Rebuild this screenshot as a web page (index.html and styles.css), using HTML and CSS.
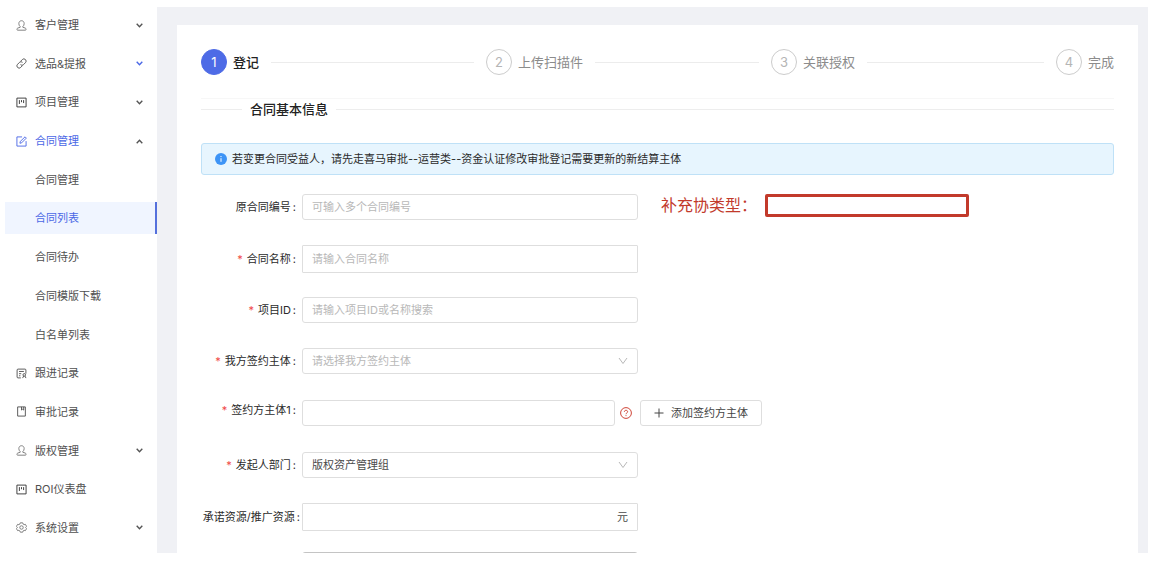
FILE: index.html
```html
<!DOCTYPE html>
<html lang="zh-CN">
<head>
<meta charset="utf-8">
<title>合同列表 - 登记</title>
<link rel="stylesheet" href="styles.css">
</head>
<body>
<svg class="sprite" aria-hidden="true">
  <symbol id="i-user" viewBox="0 0 12 12"><path d="M4.6 7.2C3.6 6.400 3.100 5.300 3.100 3.900 3.100 2 4.300.8 6 .8s2.900 1.200 2.900 3.100c0 1.400-.5 2.500-1.500 3.300v.7l2.700.9c.6.2.8.7.8 1.300v.4c0 .4-.2.600-.6.600H1.700c-.4 0-.6-.2-.6-.6v-.4c0-.6.2-1.100.8-1.300l2.700-.9z"/></symbol>
  <symbol id="i-link" viewBox="0 0 12 12"><path d="M5 3.600l1.900-1.900a2.300 2.300 0 0 1 3.400 3.400L8.200 7.200a2.300 2.300 0 0 1-3.300 0M7 8.400l-1.900 1.900a2.300 2.300 0 0 1-3.400-3.400l2.100-2.100a2.300 2.300 0 0 1 3.300 0"/></symbol>
  <symbol id="i-board" viewBox="0 0 12 12"><path d="M1 1.200h10v9.600H1zM3.700 3.400v4.200M6 3.400v2.300M8.300 3.400v3.200"/></symbol>
  <symbol id="i-edit" viewBox="0 0 12 12"><path d="M6.600 1H1v10h10V5.600M4.300 7.900l.3-1.900L9.900.9l1.400 1.400-5.200 5.200z"/></symbol>
  <symbol id="i-track" viewBox="0 0 12 12"><path d="M5.300 10.800H2.200a1 1 0 0 1-1-1V2.200a1 1 0 0 1 1-1h7.600a1 1 0 0 1 1 1v4M3.300 3.800h5.300M3.300 6.200h2.400M3.300 8.500h1.500M7.200 11l1.200-2.300M10.900 11L9.700 8.700"/><circle cx="9" cy="7.500" r="1.400"/></symbol>
  <symbol id="i-book" viewBox="0 0 12 12"><path d="M1.800 1h8.400v10H1.800zM6 1v3.400l1.200-.9 1.200.9V1"/></symbol>
  <symbol id="i-gear" viewBox="0 0 12 12"><path d="M4.700.9h2.600l.5 1.400 1 .6 1.500-.3 1.200 2.200-1 1.200 1 1.200-1.200 2.200-1.500-.3-1 .6-.5 1.400H4.700l-.5-1.400-1-.6-1.500.3L.5 7.200l1-1.200-1-1.200 1.200-2.200 1.500.3 1-.6z"/><circle cx="6" cy="6" r="1.900"/></symbol>
  <symbol id="i-down" viewBox="0 0 10 7"><path d="M1 1l4 4.200L9 1"/></symbol>
  <symbol id="i-up" viewBox="0 0 10 7"><path d="M1 6l4-4.200L9 6"/></symbol>
  <symbol id="i-open" viewBox="0 0 10 8"><path d="M1 1l4 5.500L9 1"/></symbol>
</svg>

<div class="app">
  <nav class="sidebar" aria-label="主菜单">
    <a class="item" href="#"><svg class="icon icon--thin"><use href="#i-user"/></svg>客户管理<svg class="arrow"><use href="#i-down"/></svg></a>
    <a class="item" href="#"><svg class="icon"><use href="#i-link"/></svg>选品&amp;提报<svg class="arrow arrow--blue"><use href="#i-down"/></svg></a>
    <a class="item" href="#"><svg class="icon icon--dark"><use href="#i-board"/></svg>项目管理<svg class="arrow"><use href="#i-down"/></svg></a>
    <a class="item item--open" href="#"><svg class="icon"><use href="#i-edit"/></svg>合同管理<svg class="arrow"><use href="#i-up"/></svg></a>
    <a class="item item--sub" href="#">合同管理</a>
    <a class="item item--sub item--current" href="#" aria-current="page">合同列表</a>
    <a class="item item--sub" href="#">合同待办</a>
    <a class="item item--sub" href="#">合同模版下载</a>
    <a class="item item--sub" href="#">白名单列表</a>
    <a class="item" href="#"><svg class="icon"><use href="#i-track"/></svg>跟进记录</a>
    <a class="item" href="#"><svg class="icon"><use href="#i-book"/></svg>审批记录</a>
    <a class="item" href="#"><svg class="icon icon--thin"><use href="#i-user"/></svg>版权管理<svg class="arrow"><use href="#i-down"/></svg></a>
    <a class="item" href="#"><svg class="icon icon--dark"><use href="#i-board"/></svg>ROI仪表盘</a>
    <a class="item" href="#"><svg class="icon icon--thin"><use href="#i-gear"/></svg>系统设置<svg class="arrow"><use href="#i-down"/></svg></a>
  </nav>

  <main class="main">
    <div class="card">
      <ol class="steps">
        <li class="step step--active"><span class="step-num">1</span>登记</li>
        <li class="step"><span class="step-num">2</span>上传扫描件</li>
        <li class="step"><span class="step-num">3</span>关联授权</li>
        <li class="step"><span class="step-num">4</span>完成</li>
      </ol>

      <h2 class="section-title">合同基本信息</h2>

      <div class="alert" role="status">
        <svg class="info" viewBox="0 0 12 12" aria-hidden="true"><circle class="info-disc" cx="6" cy="6" r="6"/><path class="info-mark" d="M6 5.200v3.600M6 3v1.100"/></svg>
        <span>若变更合同受益人，请先走喜马审批--运营类--资金认证修改审批登记需要更新的新结算主体</span>
      </div>

      <form class="form">
        <div class="row">
          <label class="label" for="origin">原合同编号</label>
          <input class="box" id="origin" type="text" placeholder="可输入多个合同编号">
          <div class="extra">
            <label class="extra-label" for="extra">补充协类型：</label>
            <input class="extra-box" id="extra" type="text">
          </div>
        </div>
        <div class="row">
          <label class="label label--required" for="name">合同名称</label>
          <input class="box box--tall" id="name" type="text" placeholder="请输入合同名称">
        </div>
        <div class="row row--compact">
          <label class="label label--required" for="project">项目ID</label>
          <input class="box" id="project" type="text" placeholder="请输入项目ID或名称搜索">
        </div>
        <div class="row">
          <label class="label label--required" for="ours">我方签约主体</label>
          <div class="select">
            <select class="box box--empty" id="ours"><option>请选择我方签约主体</option></select>
            <svg class="select-arrow"><use href="#i-open"/></svg>
          </div>
        </div>
        <div class="row">
          <label class="label label--required label--top" for="party">签约方主体1</label>
          <div class="party">
            <input class="box" id="party" type="text">
            <svg class="help" viewBox="0 0 12 12" aria-hidden="true"><circle cx="6" cy="6" r="5.400"/><path d="M4.400 4.900C4.400 3.900 5 3.300 6 3.300s1.600.6 1.600 1.500c0 1.100-1.600 1.200-1.600 2.400M6 8.200v.9"/></svg>
          </div>
          <button class="add" type="button"><svg class="plus" viewBox="0 0 10 10" aria-hidden="true"><path d="M5 .5v9M.5 5h9"/></svg>添加签约方主体</button>
        </div>
        <div class="row">
          <label class="label label--required" for="dept">发起人部门</label>
          <div class="select">
            <select class="box" id="dept"><option>版权资产管理组</option></select>
            <svg class="select-arrow"><use href="#i-open"/></svg>
          </div>
        </div>
        <div class="pair">
          <div class="row">
            <label class="label label--long" for="resource">承诺资源/推广资源</label>
            <div class="box box--tall affix">
              <input class="affix-input" id="resource" type="text">
              <span>元</span>
            </div>
          </div>
          <div class="row">
            <textarea class="box box--dark" aria-label="备注"></textarea>
          </div>
        </div>
      </form>
    </div>
  </main>
</div>
</body>
</html>
```
FILE: styles.css
```css
* {
  box-sizing: border-box;
}

body {
  margin: 0;
  padding: 7px 26px 11px 5px;
  height: 100vh;
  overflow: hidden;
  background: #fff;
  color: #2b2b2b;
  font-family: Inter, "Noto Sans CJK SC", sans-serif;
  font-size: 11px;
  line-height: 22px;
}

input,
select,
textarea,
button {
  font: inherit;
  color: inherit;
}

svg {
  flex: none;
  fill: none;
  stroke: currentColor;
}

.sprite {
  position: absolute;
  width: 0;
  height: 0;
}

.app {
  display: flex;
  height: 100%;
}

/* Sidebar */
.sidebar {
  flex: none;
  display: flex;
  flex-direction: column;
  justify-content: space-between;
  width: 152px;
  padding: 2px 0 9px;
}

.item {
  display: flex;
  align-items: center;
  gap: 8px;
  height: 32px;
  padding: 0 14px 0 11px;
  color: #505050;
  text-decoration: none;
}

.item--sub {
  padding-left: 30px;
}

.item--open {
  color: #4b68e6;
}

.item--current {
  background: #f0f5ff;
  border-right: 2px solid #5570dc;
  color: #4b68e6;
}

.icon {
  width: 11px;
  height: 11px;
}

.icon--thin {
  color: #777;
}

.icon--dark {
  color: #333;
}

.arrow {
  width: 7px;
  height: 5px;
  margin-left: auto;
  color: #555;
  stroke-width: 2;
}

.arrow--blue {
  color: #4b68e6;
}

/* Content */
.main {
  flex: 1;
  min-width: 0;
  padding: 18px 10px 0 20px;
  background: #f0f1f5;
  overflow: hidden;
}

.card {
  min-height: 100%;
  padding: 24px 24px 0;
  background: #fff;
}

.steps {
  display: flex;
  margin: 0;
  padding: 0 0 23px;
  border-bottom: 1px solid #f7f7f7;
  list-style: none;
}

.step {
  flex: 1;
  display: flex;
  align-items: center;
  color: #8c8c8c;
  font-size: 13px;
  white-space: nowrap;
}

.step:last-child {
  flex: none;
}

.step:not(:last-child)::after {
  content: "";
  flex: 1;
  height: 1px;
  margin: 0 12px;
  background: #ececec;
}

.step-num {
  display: grid;
  place-items: center;
  width: 26px;
  height: 26px;
  margin-right: 6px;
  border: 1px solid #ccc;
  border-radius: 50%;
  color: #b5b5b5;
}

.step--active {
  color: #222;
  font-weight: 500;
}

.step--active .step-num {
  border-color: #4e6be6;
  background: #4e6be6;
  color: #fff;
  font-weight: 400;
}

.section-title {
  display: flex;
  align-items: center;
  gap: 8px;
  margin: 0 0 24px;
  color: #222;
  font-size: 13px;
  font-weight: 500;
  line-height: 20px;
}

.section-title::before,
.section-title::after {
  content: "";
  width: 41px;
  height: 1px;
  background: #ededed;
}

.section-title::after {
  flex: 1;
}

.alert {
  display: flex;
  align-items: center;
  gap: 5px;
  min-height: 32px;
  padding: 0 13px;
  border: 1px solid #bfe1f7;
  border-radius: 3px;
  background: #e7f5fe;
}

.info {
  width: 12px;
  height: 12px;
}

.info-disc {
  fill: #3d94f6;
  stroke: none;
}

.info-mark {
  stroke: #fff;
}

/* Form */
.form {
  display: flex;
  flex-direction: column;
  gap: 24px;
  margin-top: 18px;
}

.row {
  display: grid;
  grid-template-columns: 101px minmax(0, 336px) auto;
  justify-content: start;
  align-items: center;
  min-height: 28px;
}

.row--compact {
  min-height: 26px;
}

.pair {
  display: flex;
  flex-direction: column;
  gap: 20px;
}

.label {
  padding-right: 6px;
  text-align: right;
  white-space: nowrap;
}

.label::after {
  content: ":";
  margin-left: 2px;
}

.label--required::before {
  content: "*";
  margin-right: 4px;
  color: #f04848;
}

.label--top {
  align-self: start;
}

.label--long {
  padding-right: 2px;
}

.box {
  grid-column: 2;
  width: 100%;
  height: 26px;
  margin: 0;
  padding: 0 9px;
  border: 1px solid #dedede;
  border-radius: 3px;
  background: #fff;
  color: #4a4a4a;
  outline: none;
}

.box::placeholder {
  color: #b8b8b8;
}

.box--tall {
  height: 28px;
  border-radius: 1px;
}

.box--empty {
  color: #b8b8b8;
}

.box--dark {
  display: block;
  border-color: #c4c4c4;
  resize: none;
}

.select {
  position: relative;
}

.select .box {
  display: block;
  appearance: none;
}

.select-arrow {
  position: absolute;
  top: 9px;
  right: 10px;
  width: 10px;
  height: 8px;
  color: #b8b8b8;
  pointer-events: none;
}

.party {
  display: flex;
  align-items: center;
  gap: 5px;
  padding-right: 6px;
}

.party .box {
  flex: 1;
  min-width: 0;
}

.help {
  width: 12px;
  height: 12px;
  color: #cf4638;
}

.add {
  display: flex;
  align-items: center;
  gap: 7px;
  height: 26px;
  margin-left: 2px;
  padding: 0 13px;
  border: 1px solid #dedede;
  border-radius: 3px;
  background: #fff;
  color: #444;
  white-space: nowrap;
}

.plus {
  width: 10px;
  height: 10px;
}

.affix {
  display: flex;
  align-items: center;
}

.affix-input {
  flex: 1;
  min-width: 0;
  padding: 0;
  border: 0;
  outline: none;
  background: none;
}

.extra {
  display: flex;
  align-items: center;
  gap: 8px;
  margin-left: 23px;
  padding-bottom: 4px;
}

.extra-label {
  color: #c23a2b;
  font-size: 16px;
  white-space: nowrap;
}

.extra-box {
  width: 204px;
  height: 23px;
  padding: 0 6px;
  border: 3px solid #c23a2b;
  border-radius: 2px;
  background: #fff;
  outline: none;
}
```
